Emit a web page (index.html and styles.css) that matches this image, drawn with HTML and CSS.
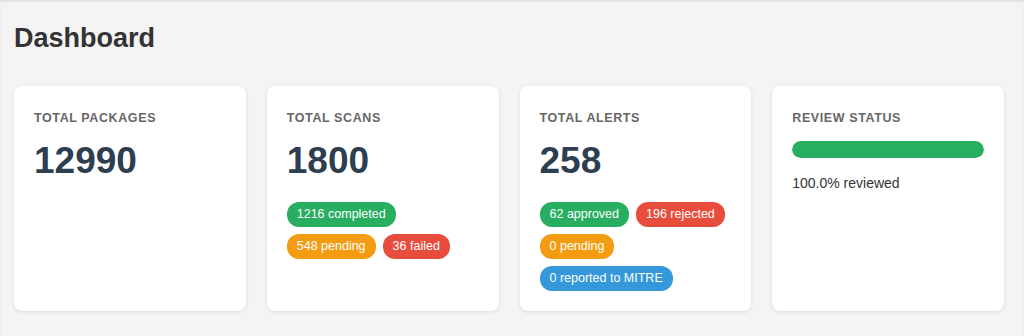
FILE: index.html
```html
<!DOCTYPE html>
<html lang="en">
	<head>
		<meta charset="utf-8">
		<title>Dashboard</title>
		<link rel="stylesheet" href="styles.css">
	</head>
	<body>
		<div id="page">
			<h1 id="page-title">Dashboard</h1>
			<div id="stats">
				<div class="card">
					<div class="card-label">Total Packages</div>
					<div class="card-value">12990</div>
				</div>
				<div class="card">
					<div class="card-label">Total Scans</div>
					<div class="card-value">1800</div>
					<div class="badges">
						<span class="badge green">1216 completed</span>
						<span class="badge orange">548 pending</span>
						<span class="badge red">36 failed</span>
					</div>
				</div>
				<div class="card">
					<div class="card-label">Total Alerts</div>
					<div class="card-value">258</div>
					<div class="badges">
						<span class="badge green">62 approved</span>
						<span class="badge red">196 rejected</span>
						<span class="badge orange">0 pending</span>
						<span class="badge blue">0 reported to MITRE</span>
					</div>
				</div>
				<div class="card">
					<div class="card-label">Review Status</div>
					<div class="progress">
						<div class="progress-fill" style="width:100%"></div>
					</div>
					<div class="progress-text">100.0% reviewed</div>
				</div>
			</div>
		</div>
	</body>
</html>
```

FILE: styles.css
```css
* {
	box-sizing:border-box}
body {
	background-color:#f4f4f4;
	box-shadow:inset 0 2px 3px -1px rgba(0,0,0,0.12);
	color:#333333;
	font-family:"Liberation Sans", Arial, sans-serif;
	margin:0;
	min-height:336px}
#page {
	padding:22px 20px 0 14px}
#page-title {
	font-size:27px;
	font-weight:bold;
	line-height:32px;
	margin:0 0 32px 0}
#stats {
	display:grid;
	gap:21px;
	grid-template-columns:repeat(4, 1fr)}
.card {
	background-color:#ffffff;
	border-radius:8px;
	box-shadow:0 1px 4px rgba(0,0,0,0.1);
	padding:25px 20px 20px 20px}
.card-label {
	color:#666666;
	font-size:12.5px;
	font-weight:bold;
	letter-spacing:0.6px;
	line-height:15px;
	text-transform:uppercase}
.card-value {
	color:#2c3e50;
	font-size:37px;
	font-weight:bold;
	line-height:40px;
	margin-top:15px}
.badges {
	display:flex;
	flex-wrap:wrap;
	gap:7px 7px;
	margin-top:21px}
.badge {
	border-radius:12px;
	color:#ffffff;
	font-size:12.5px;
	line-height:15px;
	padding:5px 10px}
.green {
	background-color:#27ae60}
.orange {
	background-color:#f39c12}
.red {
	background-color:#e74c3c}
.blue {
	background-color:#3498db}
.progress {
	background-color:#ecf0f1;
	border-radius:9px;
	height:17px;
	margin-top:15px;
	overflow:hidden}
.progress-fill {
	background-color:#27ae60;
	border-radius:9px;
	height:100%}
.progress-text {
	font-size:14px;
	line-height:18px;
	margin-top:16px}
```
